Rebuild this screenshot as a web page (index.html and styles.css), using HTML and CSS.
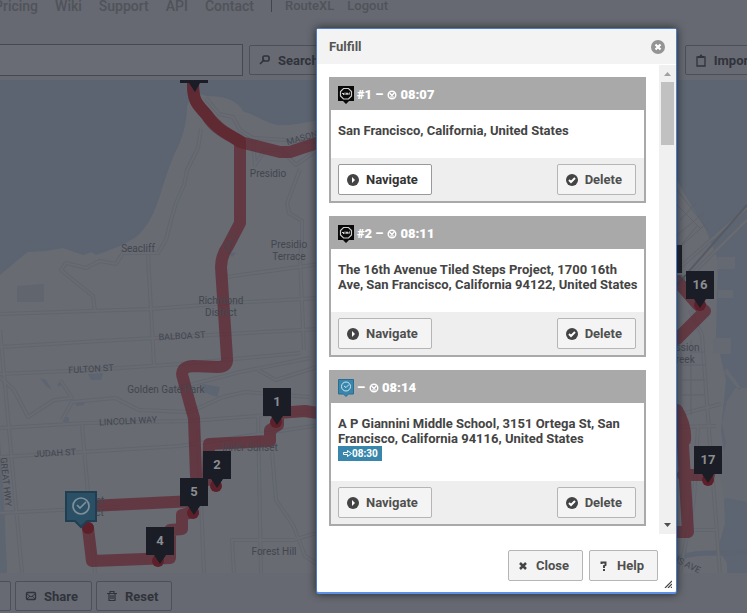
FILE: index.html
```html
<!DOCTYPE html>
<html lang="en">
<head>
<meta charset="utf-8">
<title>RouteXL</title>
<link rel="stylesheet" href="styles.css">
</head>
<body>
<svg width="0" height="0" class="defs" aria-hidden="true">
  <symbol id="i-play" viewBox="0 0 12 12"><circle cx="6" cy="6" r="6" fill="#444"/><path d="M5 3l3 3-3 3z" fill="#fff"/></symbol>
  <symbol id="i-check" viewBox="0 0 12 12"><circle cx="6" cy="6" r="6" fill="#444"/><path d="M3 6l2 2 4-4" fill="none" stroke="#fff" stroke-width="2"/></symbol>
  <symbol id="i-stop" viewBox="0 0 16 18"><path d="M0 0h16v15h-5l-3 3-3-3H0z" fill="#090909"/><path d="M5.500 2.500h5l3 3v4.500l-3 3h-5l-3-3V5.500z" fill="none" stroke="#ccc" stroke-width="1.200"/><path d="M4 7.500h2M5 8.500h1M7 6.500v2.500M8.500 7h1v1.500h-1zM11 9V7h1" stroke="#ccc" stroke-width="1" fill="none"/></symbol>
  <symbol id="i-timed" viewBox="0 0 16 18"><path d="M.5.500h15v14.500h-5l-2.500 2.500-2.500-2.500h-5z" fill="#3986ac" stroke="#2b6c8f"/><circle cx="8" cy="7.500" r="4.500" fill="none" stroke="#cfe6f1"/><path d="M6 7l2 1.500 3-3" fill="none" stroke="#cfe6f1"/></symbol>
  <symbol id="i-clock" viewBox="0 0 10 10"><circle cx="5" cy="5" r="3.800" fill="none" stroke="#fff" stroke-width="1.400"/><path d="M2.500 3l2.500 2.500 2.500-3M3 7h4" fill="none" stroke="#fff" stroke-width="1.200"/></symbol>
</svg>

<header class="topbar">
  <nav class="nav">
    <a href="#">Pricing</a><a href="#">Wiki</a><a href="#">Support</a><a href="#">API</a><a href="#">Contact</a>
    <span class="sep"></span>
    <a href="#" class="account">RouteXL</a><a href="#" class="account logout">Logout</a>
  </nav>
</header>

<div class="toolbar">
  <input class="address" type="text" aria-label="Address">
  <button class="dim-btn search" type="button">
    <svg width="12" height="12" viewBox="0 0 12 12"><path d="M5 2h4l1 1v3L9 7H6L4 6V3zM4.500 6.500L1 10" fill="none" stroke="#30333b" stroke-width="1.700"/></svg>Search</button>
  <button class="dim-btn import" type="button">
    <svg width="12" height="13" viewBox="0 0 12 13"><path d="M2 3h8v9H2z" fill="none" stroke="#30333b" stroke-width="1.300"/><path d="M3 2h1.500l1-1.500h1l1 1.500H9v2H3z" fill="#30333b"/></svg>Import</button>
</div>

<main class="map">
<svg viewBox="0 80 747 493" preserveAspectRatio="xMidYMid slice" role="img" aria-label="Route map">
  <rect x="0" y="80" width="747" height="493" fill="#686b72"/>
  <path d="M0 80H747V160H677V127L640 110H330L317 120C300 124 285 126 277 125C262 121 252 113 244 112C236 99 224 96 207 96L193 92L187 106C187 119 184 132 180 142C172 158 166 175 161 192C154 215 146 229 136 237C123 245 116 248 96 255L92 252L83 255L63 248L46 251L28 252L20 258L0 275Z" fill="#5b6470"/>
  <path d="M0 440L4 500L7 573H0Z" fill="#5d6571"/>
  <path d="M677 80H747V573H727V563L718 549L725 523L724 500L729 489L721 430L726 380L716 337L718 260L706 230L688 200L677 180Z" fill="#5c6571"/>
  <path d="M718 257h17v12h-17zM718 290h15v8h-15zM713 338h18v16h-18z" fill="#656972"/>
  <path d="M727 368l14 20-2 2-15-18zM747 388h-12l-8 13-5 22 4 20-7 28 5 27 23 4z" fill="#656971"/>
  <path d="M678 558C698 550 720 555 747 551" fill="none" stroke="#5b6470" stroke-width="5"/>
  <g fill="#5c6571"><path d="M88 374l15-1-2 7h-10zM76 402l9-2-1 5-8 1zM63 417h6v5h-6zM57 384l7-3-5 6zM202 384l18 3-3 10-13-5zM228 252l8 1-4 4zM40 378l6 2 6 10-6-4z"/></g>
  <path d="M17 286l27-2v18H17z" fill="#61656e"/>
  <g class="road-case">
    <path id="r1" d="M201 129L198 148L187 170L184 185L176 203L171 220L166 240L158 253L123 253L116 264L100 261L86 268L66 263L61 270L78 284L93 296L95 312M0 314L150 309L230 303L320 298M206 98L219 114L233 117L240 130L253 138L317 142M0 347L100 341L320 329M0 374L90 370L180 364L300 353M0 428L87 423L190 421L320 411M0 457L180 446L320 425M0 513L120 507M148 255L154 365M300 258L304 350M82 425L95 573M198 430L204 573M0 330L22 573M226 277L320 264M300 169L287 203L289 213L302 221L302 240L300 258M0 377L14 390L28 417L54 400L72 398L60 380M62 420L72 402L115 398L139 410L190 412L223 397L245 392L310 397M170 390L240 372L310 358M258 370L276 380L317 367M258 415L261 573M272 452L276 500L293 525L305 556L317 564M317 533L293 540L232 540L234 573M253 138L255 165L265 150L281 150L296 165L317 150M677 270L747 208M684 282L747 220M677 415L721 404M677 427L716 426M690 310L702 335L709 430L720 573M698 425L694 500L680 573M694 530L716 530"/>
  </g>
  <g class="road-core"><use href="#r1"/></g>
  <g fill="none" stroke="#5e626a" stroke-width="1"><path d="M677 205l24 24M680 220l17-18M677 235l27-22M677 190l31 40M682 245l27-24M677 250l20-24M691 340v75M681 345v60M691 352h14M681 365h24M681 380h24M681 395h24"/></g>
  <path d="M677 285L747 205" stroke="#555a63" stroke-width="2"/>

  <g class="route">
    <path d="M193 84C193 101 197 104 206 114C217 128 225 133 240 141V223L228 246Q221 256 221 267L227 358Q228 367 218 367L193 366Q179 367 183 378L190 404L194 418L196 476"/>
    <path d="M193 84C193 101 197 104 206 114C217 132 228 133 240 142L280 152H290L317 143"/>
    <path d="M330 415L305 411L278 413V425L270 430V441L209 444L208 480"/>
    <path d="M90 506L194 501M88 528L92 561L170 558V530L182 529V515L193 512"/>
    <path d="M677 281L698 305L705 311L677 339M677 410Q686 425 685 440M677 415L683 445L688 532H670M683 475L709 475"/>
  </g>
  <g class="dots"><circle cx="276" cy="422" r="6"/><circle cx="216" cy="486" r="6"/><circle cx="193" cy="513" r="6"/><circle cx="158" cy="561" r="6"/><circle cx="88" cy="528" r="6"/><circle cx="700" cy="305" r="6"/><circle cx="708" cy="480" r="6"/></g>

  <g class="labels">
    <text x="268" y="177">Presidio</text><text x="138" y="252">Seacliff</text>
    <text x="289" y="248">Presidio</text><text x="289" y="260">Terrace</text>
    <text x="221" y="304">Richmond</text><text x="221" y="316">District</text>
    <text x="166" y="393">Golden Gate Park</text><text x="250" y="451">Inner Sunset</text>
    <text x="89" y="504">Sunset</text><text x="88" y="516">District</text>
    <text x="274" y="555">Forest Hill</text>
    <text x="682" y="351">Mission</text><text x="682" y="363">Creek</text>
  </g>
  <g class="streets">
    <text x="182" y="339" transform="rotate(-3 182 336)">BALBOA ST</text>
    <text x="91" y="372" transform="rotate(-3 91 369)">FULTON ST</text>
    <text x="128" y="424" transform="rotate(-3 128 421)">LINCOLN WAY</text>
    <text x="55" y="456" transform="rotate(-3 55 453)">JUDAH ST</text>
    <text x="6" y="485" transform="rotate(84 6 482)">GREAT HWY</text>
    <text x="302" y="141" transform="rotate(-16 302 138)">MASON</text>
    <text x="230" y="245" transform="rotate(-62 230 242)">CA 1</text>
    <text x="678" y="566" transform="rotate(26 684 564)">EVANS AVE</text>
    <text x="683" y="282">80</text>
  </g>

  <g fill="#1a1d25">
    <path d="M180 80h28v3h-8l-5 9-6-9h-9zM660 245h22v28h-22z"/>
    <path id="pin" d="M263 388h28v28h-8l-6 9-6-9h-8z"/>
    <use href="#pin" x="-60" y="63"/><use href="#pin" x="-83" y="90"/><use href="#pin" x="-117" y="139"/><use href="#pin" x="423" y="-117"/><use href="#pin" x="431" y="58"/>
  </g>
  <g class="numbers"><text x="277" y="406">1</text><text x="217" y="469">2</text><text x="194" y="496">5</text><text x="160" y="545">4</text><text x="700" y="289">16</text><text x="708" y="464">17</text></g>
  <path d="M66 492h30v29h-9l-6 6-6-6h-9z" fill="#2b4f65" stroke="#203e52" stroke-width="2"/>
  <circle cx="81" cy="506" r="8" fill="none" stroke="#7f8f99" stroke-width="1.700"/><path d="M77 505l3 3 6-6" fill="none" stroke="#7f8f99" stroke-width="1.700"/>
</svg>
</main>

<footer class="actions">
  <button class="dim-btn cut" type="button" aria-label="More"></button>
  <button class="dim-btn share" type="button">
    <svg width="12" height="12" viewBox="0 0 12 12"><rect x="1.500" y="2.500" width="9" height="7" rx="1" fill="none" stroke="#30333b" stroke-width="1.300"/><path d="M2 4l4 3 4-3M2 9l3-3M10 9L7 6" fill="none" stroke="#30333b"/></svg>Share</button>
  <button class="dim-btn" type="button">
    <svg width="12" height="12" viewBox="0 0 12 12"><path d="M1 3.500h10M4 3V1.500h4V3M3 4v6.500h6V4M5 5v4M7 5v4" fill="none" stroke="#30333b" stroke-width="1.200"/></svg>Reset</button>
</footer>

<section class="dialog" role="dialog" aria-labelledby="dlg-title">
  <div class="titlebar">
    <h2 id="dlg-title">Fulfill</h2>
    <button class="x" type="button" aria-label="Close dialog"><svg width="14" height="14" viewBox="0 0 14 14"><circle cx="7" cy="7" r="7" fill="#949494"/><path d="M4.500 4.500l5 5M9.500 4.500l-5 5" stroke="#fff" stroke-width="2.200"/></svg></button>
  </div>
  <div class="content">
    <div class="list">
      <article class="card">
        <h3><svg width="16" height="18"><use href="#i-stop"/></svg><span>#1 –</span><svg class="clock" width="10" height="10"><use href="#i-clock"/></svg><span>08:07</span></h3>
        <div class="place">San Francisco, California, United States</div>
        <div class="buttons"><button class="btn focused" type="button"><svg width="12" height="12"><use href="#i-play"/></svg>Navigate</button><button class="btn" type="button"><svg width="12" height="12"><use href="#i-check"/></svg>Delete</button></div>
      </article>
      <article class="card">
        <h3><svg width="16" height="18"><use href="#i-stop"/></svg><span>#2 –</span><svg class="clock" width="10" height="10"><use href="#i-clock"/></svg><span>08:11</span></h3>
        <div class="place">The 16th Avenue Tiled Steps Project, 1700 16th Ave, San Francisco, California 94122, United States</div>
        <div class="buttons"><button class="btn" type="button"><svg width="12" height="12"><use href="#i-play"/></svg>Navigate</button><button class="btn" type="button"><svg width="12" height="12"><use href="#i-check"/></svg>Delete</button></div>
      </article>
      <article class="card">
        <h3><svg width="16" height="18"><use href="#i-timed"/></svg><span>–</span><svg class="clock" width="10" height="10"><use href="#i-clock"/></svg><span>08:14</span></h3>
        <div class="place">A P Giannini Middle School, 3151 Ortega St, San Francisco, California 94116, United States
          <div class="due"><svg width="9" height="7" viewBox="0 0 9 7"><path d="M.5 2.500h4V.5l4 3-4 3v-2h-4z" fill="none" stroke="#fff"/></svg>08:30</div></div>
        <div class="buttons"><button class="btn" type="button"><svg width="12" height="12"><use href="#i-play"/></svg>Navigate</button><button class="btn" type="button"><svg width="12" height="12"><use href="#i-check"/></svg>Delete</button></div>
      </article>
    </div>
    <div class="scrollbar" aria-hidden="true">
      <svg width="17" height="17"><path d="M5 11l3.500-4 3.500 4z" fill="#a0a0a0"/></svg>
      <div class="thumb"></div>
      <svg class="down" width="17" height="17"><path d="M5 6h7l-3.500 4z" fill="#505050"/></svg>
    </div>
  </div>
  <div class="dialog-buttons">
    <button class="btn" type="button"><svg width="12" height="12" viewBox="0 0 12 12"><path d="M3 3l6 6M9 3L3 9" stroke="#444" stroke-width="2.500"/></svg>Close</button>
    <button class="btn" type="button"><svg width="12" height="12" viewBox="0 0 12 12"><path d="M3.500 4V2.500h4V5L6 6v2M5 10h2" fill="none" stroke="#444" stroke-width="2"/></svg>Help</button>
  </div>
  <svg class="grip" width="8" height="8" viewBox="0 0 8 8"><path d="M1 8l7-7M4 8l4-4M7 8l1-1" stroke="#444" stroke-width="1.200"/></svg>
</section>
</body>
</html>
```

FILE: styles.css
```css
* { box-sizing: border-box; }
body {
  margin: 0;
  min-height: 100vh;
  display: flex;
  flex-direction: column;
  overflow: hidden;
  background: #666971;
  font: 700 13px/15px Roboto, sans-serif;
  color: #444;
}
button, input { font: inherit; color: inherit; }
h2, h3 { margin: 0; font: inherit; }
.defs { position: absolute; }

.topbar { height: 38px; }
.nav {
  display: flex;
  gap: 17px;
  margin-left: -6px;
  font-size: 14px;
  line-height: 12px;
  font-weight: 500;
}
.nav a { color: #50535a; text-decoration: none; }
.nav .sep { width: 1px; background: #41454d; }
.nav .account { font-weight: 500; font-size: 13px; margin-left: -4px; }

.toolbar {
  display: flex;
  align-items: center;
  gap: 6px;
  height: 42px;
  padding-top: 2px;
  overflow: hidden;
}
.address {
  flex: 0 0 244px;
  height: 32px;
  margin-left: -1px;
  background: #696c74;
  border: 1px solid #454951;
}
.dim-btn {
  display: flex;
  align-items: center;
  gap: 7px;
  height: 30px;
  flex-shrink: 0;
  padding: 0 13px 0 9px;
  background: #676a72;
  border: 1px solid #4c5059;
  border-radius: 2px;
  color: #30333b;
}
.import { margin-left: auto; margin-right: -20px; }

.map { flex: 1; min-height: 0; overflow: hidden; background: #686b72; }
.map svg { display: block; width: 100%; height: 100%; }
.road-case { fill: none; stroke: #61656d; stroke-width: 4; stroke-linejoin: round; }
.road-core { fill: none; stroke: #686b72; stroke-width: 2; }
.labels, .streets { font-family: Roboto, sans-serif; fill: #42464f; text-anchor: middle; font-weight: 400; }
.labels { font-size: 10px; }
.streets { font-size: 9px; }
.route { fill: none; stroke: #60242d; stroke-opacity: 0.7; stroke-width: 12; stroke-linecap: round; stroke-linejoin: round; }
.dots { fill: #5d202a; }
.numbers { font: 700 13px Roboto, sans-serif; fill: #8b8d92; text-anchor: middle; }

.actions { display: flex; align-items: center; gap: 4px; height: 40px; padding-top: 6px; }
.actions .cut { width: 15px; margin-left: -4px; padding: 0; }

.dialog {
  position: absolute;
  top: 28px;
  right: 70px;
  width: 361px;
  background: #fff;
  border: 1px solid #4a7dc6;
  border-bottom: 2px solid #5b91e8;
  border-radius: 3px;
  box-shadow: 0 0 8px #25282e;
}
.titlebar {
  display: flex;
  justify-content: space-between;
  align-items: center;
  height: 35px;
  padding: 0 11px 0 12px;
  background: #f3f3f3;
  color: #555;
}
.x { border: 0; padding: 0; background: none; height: 18px; }
.x svg { display: block; }
.content { display: flex; height: 470px; padding-top: 1px; }
.list {
  flex: 1;
  display: flex;
  flex-direction: column;
  gap: 13px;
  padding: 12px 13px 0 12px;
  overflow: hidden;
}
.card { flex-shrink: 0; border: 2px solid #a9a9a9; }
.card h3 {
  display: flex;
  align-items: center;
  gap: 3px;
  height: 31px;
  padding: 0 7px;
  background: #a9a9a9;
  color: #fff;
  font-weight: 900;
}
.card .clock { margin-left: 1px; }
.place { padding: 13px 5px 20px 7px; }
.due {
  display: flex;
  align-items: center;
  width: 44px;
  height: 15px;
  padding-left: 5px;
  background: #3986ac;
  color: #fff;
  font-size: 10px;
}
.buttons {
  display: flex;
  justify-content: space-between;
  padding: 6px 8px 6px 7px;
  background: #eee;
}
.btn {
  display: flex;
  align-items: center;
  gap: 7px;
  height: 31px;
  padding: 0 13px 0 8px;
  background: #f4f4f4;
  border: 1px solid #b5b5b5;
  border-radius: 2px;
  color: #4f4f4f;
}
.btn.focused { background: #fff; border-color: #999; color: #333; }
.scrollbar { width: 17px; display: flex; flex-direction: column; background: #f0f0f0; }
.scrollbar .down { margin-top: auto; }
.thumb { height: 63px; margin: 0 2px; background: #c1c1c1; }
.dialog-buttons { display: flex; justify-content: flex-end; gap: 6px; padding: 16px 18px 11px; }
.grip { position: absolute; right: 4px; bottom: 4px; }
```
